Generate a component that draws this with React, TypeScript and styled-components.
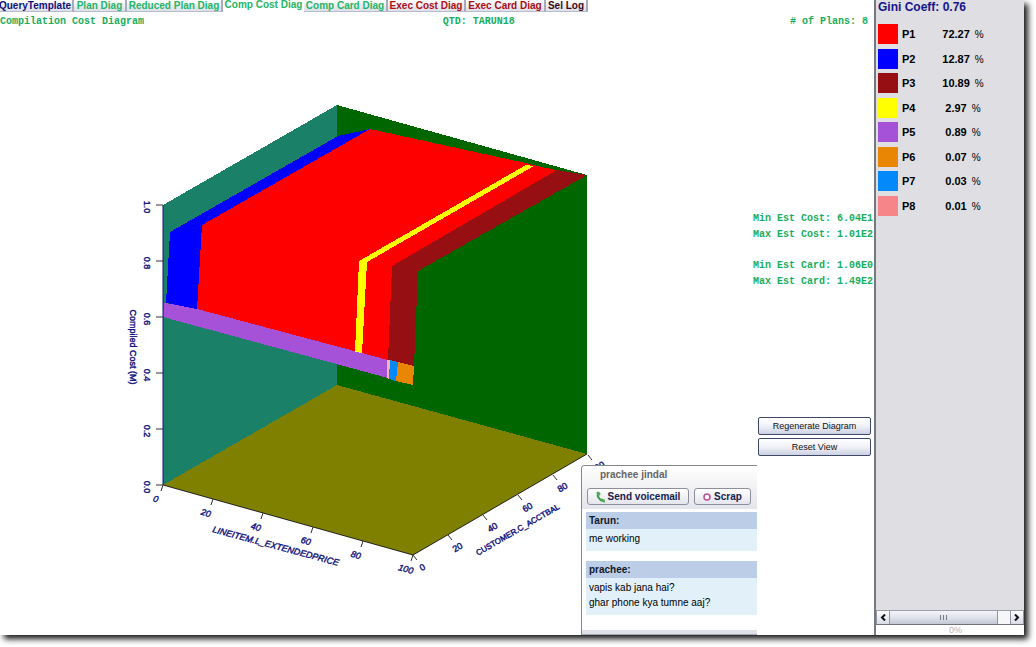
import React from 'react';
import styled, { createGlobalStyle } from 'styled-components';

const GlobalStyle = createGlobalStyle`
  * { box-sizing: border-box; }
  html, body, #root { height: 100%; }
  body { margin: 0; background: #fff; font-family: 'Liberation Sans', Arial, sans-serif; font-size: 10px; color: #000; }
  button { font-family: inherit; margin: 0; padding: 0; cursor: pointer; }
`;

const Page = styled.div`
  height: 100%;
  padding: 0 12px 12px 0;
  overflow: hidden;
`;

const Frame = styled.div`
  display: flex;
  height: 100%;
  background: #fff;
  box-shadow: 4px 4px 6px rgba(0, 0, 0, 0.9);
`;

const Main = styled.main`
  flex: 1;
  min-width: 0;
  display: flex;
  flex-direction: column;
  overflow: hidden;
`;

const Tabs = styled.nav`
  display: flex;
  height: 12px;
  margin-left: -2px;
`;

const Tab = styled.button<{ $color: string; $width: number; $active?: boolean }>`
  width: ${(p) => p.$width}px;
  height: ${(p) => (p.$active ? 10 : 12)}px;
  border: 0;
  border-right: ${(p) => (p.$active ? '0' : '2px solid #a9abba')};
  border-bottom: ${(p) => (p.$active ? '0' : '1px solid #b9bccb')};
  background: ${(p) => (p.$active ? '#fff' : 'linear-gradient(#fff, #dcdeea)')};
  color: ${(p) => p.$color};
  font-size: 10px;
  font-weight: bold;
  line-height: 10px;
  white-space: nowrap;
`;

const Header = styled.header`
  display: grid;
  grid-template-columns: 51% 1fr auto;
  padding: 4px 6px 0 0;
  font: bold 10px/12px 'Liberation Mono', monospace;
  color: #18ad5c;
  white-space: pre;
`;

const Body = styled.div`
  flex: 1;
  min-height: 0;
  display: flex;
`;

const Canvas = styled.section`
  position: relative;
  flex: 1;
  min-width: 0;
`;

const Chart = styled.svg`
  display: block;
  width: 100%;
  height: 100%;
  font: 9px 'Liberation Sans', Arial, sans-serif;
`;

const Side = styled.aside`
  display: flex;
  flex-direction: column;
  width: 117px;
`;

const Stats = styled.div`
  display: flex;
  flex-direction: column;
  align-items: flex-end;
  height: 206px;
  margin-top: 183px;
  padding-right: 1px;
  font: bold 10px/16px 'Liberation Mono', monospace;
  color: #18ad5c;
  white-space: nowrap;
`;

const StatGroup = styled.div`
  margin-bottom: 15px;
`;

const Actions = styled.div`
  display: flex;
  flex-direction: column;
  gap: 3px;
  padding: 0 3px 0 1px;
`;

const ActionButton = styled.button`
  height: 18px;
  border: 1px solid #3c4866;
  border-radius: 2px;
  background: linear-gradient(#fff, #f0f1f8 50%, #ccd0e2);
  color: #111;
  font-size: 9px;
  line-height: 14px;
`;

const ChatWindow = styled.section`
  position: absolute;
  right: 0;
  bottom: 0;
  width: 176px;
  height: 170px;
  display: flex;
  flex-direction: column;
  border: 1px solid #85868c;
  border-right: 0;
  border-bottom: 0;
  border-radius: 4px 0 0 0;
  background: #fff;
  overflow: hidden;
`;

const ChatHead = styled.div`
  height: 43px;
  background: linear-gradient(#fff, #ececf0 70%, #e4e5ec);
`;

const ChatName = styled.h2`
  margin: 0;
  padding: 3px 0 0 18px;
  font-size: 10px;
  line-height: 12px;
  color: #666;
`;

const ChatTools = styled.div`
  display: flex;
  gap: 5px;
  padding: 7px 5px 0;
`;

const ChatButton = styled.button<{ $width: number }>`
  display: flex;
  align-items: center;
  justify-content: center;
  gap: 3px;
  width: ${(p) => p.$width}px;
  height: 17px;
  border: 1px solid #8d8f9d;
  border-radius: 3px;
  background: linear-gradient(#fff, #e4e5ed);
  color: #14214f;
  font-size: 10px;
  font-weight: bold;
  white-space: nowrap;
`;

const Messages = styled.div`
  flex: 1;
  padding: 3px 0 0 4px;
`;

const Message = styled.article`
  margin-bottom: 10px;
  background: #e2f1f9;
`;

const Sender = styled.h3`
  margin: 0;
  padding-left: 3px;
  background: #bccde8;
  font-size: 10px;
  line-height: 17px;
  color: #101828;
`;

const Words = styled.p`
  margin: 0;
  padding: 2px 3px 5px;
  font-size: 10px;
  line-height: 15px;
`;

const ChatFoot = styled.div`
  height: 5px;
  border-bottom: 1px solid #a4a6b4;
  background: #dfe1e8;
`;

const Legend = styled.aside`
  display: flex;
  flex-direction: column;
  width: 150px;
  border-left: 2px solid #77777f;
  background: #dedee3;
`;

const Gini = styled.h1`
  margin: 0;
  padding: 0 0 9px 2px;
  font-size: 12px;
  line-height: 15px;
  font-weight: bold;
  color: #14148c;
`;

const PlanList = styled.ul`
  display: flex;
  flex-direction: column;
  justify-content: space-between;
  height: 192px;
  margin: 0;
  padding: 0 0 0 1px;
  list-style: none;
`;

const Plan = styled.li`
  display: grid;
  grid-template-columns: 21px 1fr 80px 21px;
  align-items: center;
  font-size: 11px;
  font-weight: bold;
`;

const Swatch = styled.span<{ $color: string }>`
  width: 20px;
  height: 20px;
  margin-left: 1px;
  background: ${(p) => p.$color};
`;

const PlanName = styled.span`
  padding-left: 4px;
`;

const Share = styled.span`
  text-align: center;
`;

const Percent = styled.span`
  padding-left: 5px;
  font-size: 10px;
  font-weight: normal;
`;

const ScrollBar = styled.div`
  display: flex;
  height: 15px;
  margin-top: auto;
  border-top: 1px solid #9a9ca8;
  border-bottom: 1px solid #70727c;
  background: #f6f6f9;
`;

const ScrollArrow = styled.button`
  display: flex;
  align-items: center;
  justify-content: center;
  width: 14px;
  border: 0;
  border-right: 1px solid #9295a5;
  border-left: 1px solid #9295a5;
  background: linear-gradient(#fff, #d8dae6);
`;

const Track = styled.div`
  flex: 1;
  padding-right: 12px;
`;

const Thumb = styled.div`
  display: flex;
  align-items: center;
  justify-content: center;
  gap: 2px;
  height: 13px;
  border-right: 1px solid #9295a5;
  background: linear-gradient(#f4f5f9, #e0e2ea 50%, #c3c6d4);
`;

const Grip = styled.i`
  width: 1px;
  height: 5px;
  background: #777a88;
`;

const Progress = styled.div`
  height: 10px;
  padding-left: 11px;
  background: #fff;
  color: #b2b2ba;
  font-size: 9px;
  line-height: 10px;
  text-align: center;
`;

const tabs = [
  { label: 'QueryTemplate', color: '#10107a', width: 76 },
  { label: 'Plan Diag', color: '#24b565', width: 53 },
  { label: 'Reduced Plan Diag', color: '#24b565', width: 96 },
  { label: 'Comp Cost Diag', color: '#24b565', width: 81, active: true },
  { label: 'Comp Card Diag', color: '#24b565', width: 84 },
  { label: 'Exec Cost Diag', color: '#b00d14', width: 78 },
  { label: 'Exec Card Diag', color: '#a80d14', width: 80 },
  { label: 'Sel Log', color: '#3c0712', width: 42 },
];

const plans = [
  ['P1', '72.27', '#ff0000'],
  ['P2', '12.87', '#0000ff'],
  ['P3', '10.89', '#960f12'],
  ['P4', '2.97', '#ffff00'],
  ['P5', '0.89', '#a552d8'],
  ['P6', '0.07', '#e98604'],
  ['P7', '0.03', '#0489fb'],
  ['P8', '0.01', '#f58587'],
];

const steps = [0, 1, 2, 3, 4, 5];
const ink = '#10107c';

function CostChart() {
  return (
    <Chart viewBox="0 28 757 607" preserveAspectRatio="xMinYMin meet" role="img" aria-label="Compilation cost by plan">
      <g shapeRendering="crispEdges">
        <polygon points="163,205 337,105 337,385 163,485" fill="#1b8068" />
        <polygon points="337,105 587,175 587,454 337,385" fill="#006600" />
        <polygon points="163,485 337,385 587,454 413,555" fill="#808000" />
        <polygon points="164,303 197,307 388,357 388,378 163,317" fill="#a552d8" />
        <polygon points="170,232 338,136 370,129 202,225 197,309 166,303" fill="#0000ff" />
        <polygon points="202,225 370,129 530,164 559,171 393,266 388,360 197,309" fill="#ff0000" />
        <polygon points="359,261 526,165 534,166 367,262 362,353 355,352" fill="#ffff00" />
        <polygon points="392,266 557,170 587,175 418,271 414,366 388,360" fill="#960f12" />
        <polygon points="387,360 390,360 389,379 387,378" fill="#ffb0b0" />
        <polygon points="390,360 398,362 396,381 389,379" fill="#0489fb" />
        <polygon points="398,362 414,366 413,385 396,381" fill="#e98604" />
      </g>
      <path d="M163 205V485" stroke="#101080" fill="none" />
      <path d="M163 485L413 555L587 454" stroke="#222" fill="none" />
      <g stroke="#333">
        {steps.map((i) => (
          <React.Fragment key={i}>
            <path d={`M156 ${205 + i * 56}h7`} />
            <path d={`M${163 + i * 50} ${485 + i * 14}l-2 6`} />
            <path d={`M${413 + i * 35} ${555 - i * 20}l4 5`} />
          </React.Fragment>
        ))}
      </g>
      <g fill={ink} stroke={ink} strokeWidth="0.4" textAnchor="middle">
        {steps.map((i) => (
          <React.Fragment key={i}>
            <text transform={`translate(144 ${207 + i * 56}) rotate(90)`}>{(1 - i * 0.2).toFixed(1)}</text>
            <text transform={`translate(${155 + i * 50} ${502 + i * 14}) rotate(16)`} fontStyle="italic">{i * 20}</text>
            <text transform={`translate(${424 + i * 35} ${570 - i * 20}) rotate(-30)`}>{i * 20}</text>
          </React.Fragment>
        ))}
        <text transform="translate(130 347) rotate(90)">Compiled Cost (M)</text>
        <text transform="translate(275 549) rotate(15)" fontStyle="italic">LINEITEM.L_EXTENDEDPRICE</text>
        <text transform="translate(519 532) rotate(-30)" fontSize="8">CUSTOMER.C_ACCTBAL</text>
      </g>
    </Chart>
  );
}

function Chat() {
  return (
    <ChatWindow>
      <ChatHead>
        <ChatName>prachee jindal</ChatName>
        <ChatTools>
          <ChatButton $width={102}>
            <svg width="9" height="12" viewBox="0 0 9 12" fill="none" strokeLinecap="round">
              <path d="M2 2C1 5 3 9 7 10" stroke="#3d9a48" strokeWidth="2" />
              <path d="M2 2L3 3M6 9L8 10" stroke="#55aa5c" strokeWidth="3" />
            </svg>
            Send voicemail
          </ChatButton>
          <ChatButton $width={57}>
            <svg width="8" height="8" viewBox="0 0 8 8">
              <circle cx="4" cy="4" r="3" fill="#fff" stroke="#b84f9c" strokeWidth="1.5" />
            </svg>
            Scrap
          </ChatButton>
        </ChatTools>
      </ChatHead>
      <Messages>
        <Message>
          <Sender>Tarun:</Sender>
          <Words>me working</Words>
        </Message>
        <Message>
          <Sender>prachee:</Sender>
          <Words>
            vapis kab jana hai?
            <br />
            ghar phone kya tumne aaj?
          </Words>
        </Message>
      </Messages>
      <ChatFoot />
    </ChatWindow>
  );
}

export default function App() {
  return (
    <Page>
      <GlobalStyle />
      <Frame>
        <Main>
          <Tabs>
            {tabs.map((t) => (
              <Tab key={t.label} $color={t.color} $width={t.width} $active={t.active}>
                {t.label}
              </Tab>
            ))}
          </Tabs>
          <Header>
            <span>Compilation Cost Diagram</span>
            <span>QTD: TARUN18</span>
            <span># of Plans: 8</span>
          </Header>
          <Body>
            <Canvas>
              <CostChart />
              <Chat />
            </Canvas>
            <Side>
              <Stats>
                <StatGroup>
                  <div>Min Est Cost: 6.04E1</div>
                  <div>Max Est Cost: 1.01E2</div>
                </StatGroup>
                <StatGroup>
                  <div>Min Est Card: 1.06E0</div>
                  <div>Max Est Card: 1.49E2</div>
                </StatGroup>
              </Stats>
              <Actions>
                <ActionButton>Regenerate Diagram</ActionButton>
                <ActionButton>Reset View</ActionButton>
              </Actions>
            </Side>
          </Body>
        </Main>
        <Legend>
          <Gini>Gini Coeff: 0.76</Gini>
          <PlanList>
            {plans.map(([name, share, color]) => (
              <Plan key={name}>
                <Swatch $color={color} />
                <PlanName>{name}</PlanName>
                <Share>
                  {share}
                  <Percent>%</Percent>
                </Share>
              </Plan>
            ))}
          </PlanList>
          <ScrollBar>
            <ScrollArrow aria-label="Scroll left">
              <svg width="6" height="7" viewBox="0 0 6 7" fill="none" stroke="#111" strokeWidth="2">
                <path d="M5 0.5L2 3.5L5 6.5" />
              </svg>
            </ScrollArrow>
            <Track>
              <Thumb>
                <Grip />
                <Grip />
                <Grip />
              </Thumb>
            </Track>
            <ScrollArrow aria-label="Scroll right">
              <svg width="6" height="7" viewBox="0 0 6 7" fill="none" stroke="#111" strokeWidth="2">
                <path d="M1 0.5L4 3.5L1 6.5" />
              </svg>
            </ScrollArrow>
          </ScrollBar>
          <Progress>0%</Progress>
        </Legend>
      </Frame>
    </Page>
  );
}
